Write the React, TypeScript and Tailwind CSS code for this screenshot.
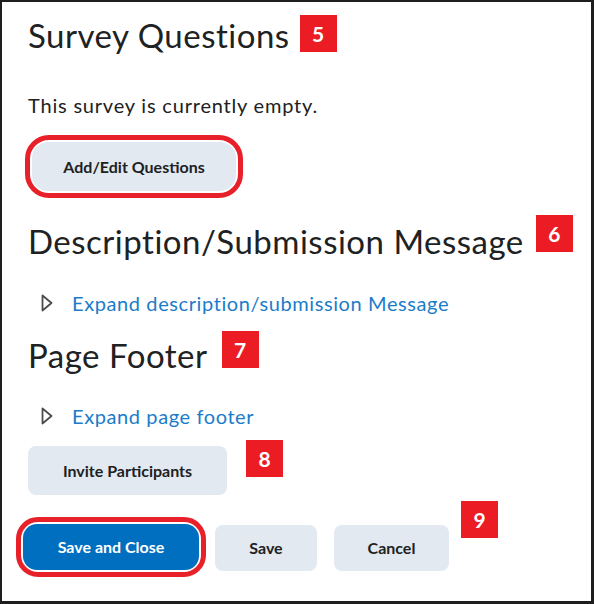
const lato = { fontFamily: "Lato, 'Noto Sans', sans-serif" };

function Badge({ n, className = "" }: { n: number; className?: string }) {
  return (
    <div
      className={`flex h-[37px] w-[37px] shrink-0 items-center justify-center bg-[#ec1c24] text-[21px] font-bold text-white ${className}`}
    >
      {n}
    </div>
  );
}

function Caret() {
  return (
    <svg width="12" height="18" viewBox="0 0 12 18" className="shrink-0">
      <polygon points="1.5,1.5 10.5,9 1.5,16.5" fill="none" stroke="#494c4e" strokeWidth="1.8" strokeLinejoin="round" />
    </svg>
  );
}

function ExpandLink({ label, className = "" }: { label: string; className?: string }) {
  return (
    <div className={`ml-[13px] flex h-[24px] items-center gap-[19px] ${className}`}>
      <Caret />
      <span className="text-[20px] leading-[24px] tracking-[0.6px] text-[#1a7cc9]">{label}</span>
    </div>
  );
}

export default function App() {
  return (
    <div
      style={lato}
      className="box-border h-[604px] w-[594px] overflow-hidden border-2 border-r-[3px] border-b-[3px] border-[#1e1e1e] bg-white pl-[26px] text-[#202122]"
    >
      <div className="mt-[13px] flex items-start gap-[10px]">
        <h1 className="text-[33px] leading-[40px] tracking-[0.5px]">Survey Questions</h1>
        <Badge n={5} />
      </div>

      <p className="mt-[38px] text-[20px] leading-[24px] tracking-[0.8px]">This survey is currently empty.</p>

      <div className="mt-[18px] inline-flex rounded-[24px] border-[5px] border-[#e8202a] bg-white p-[2px] -ml-[3px]">
        <button className="h-[49px] w-[204px] rounded-[16px] bg-[#e3e9f1] text-[16px] font-bold text-[#202122]">
          Add/Edit Questions
        </button>
      </div>

      <div className="mt-[23px] flex items-start gap-[12px]">
        <h2 className="text-[33px] leading-[40px] tracking-[0.5px]">Description/Submission Message</h2>
        <Badge n={6} className="-mt-[6px]" />
      </div>

      <ExpandLink label="Expand description/submission Message" className="mt-[30px]" />

      <div className="mt-[20px] flex items-start gap-[14px]">
        <h2 className="text-[33px] leading-[40px] tracking-[0.5px]">Page Footer</h2>
        <Badge n={7} className="-mt-[4px]" />
      </div>

      <ExpandLink label="Expand page footer" className="mt-[29px]" />

      <div className="mt-[12px] flex items-start gap-[19px]">
        <button className="mt-[6px] h-[49px] w-[199px] rounded-[8px] bg-[#e3e9f1] text-[16px] font-bold text-[#202122]">
          Invite Participants
        </button>
        <Badge n={8} />
      </div>

      <div className="mt-[6px] -ml-[12px] flex items-start">
        <div className="mt-[16px] inline-flex rounded-[22px] border-[5px] border-[#e8202a] bg-white p-[2px]">
          <button className="h-[46px] w-[176px] rounded-[14px] bg-[#006fbf] text-[16px] font-bold text-white">
            Save and Close
          </button>
        </div>
        <button className="ml-[9px] mt-[24px] h-[46px] w-[102px] rounded-[8px] bg-[#e3e9f1] text-[16px] font-bold text-[#202122]">
          Save
        </button>
        <button className="ml-[17px] mt-[24px] h-[46px] w-[115px] rounded-[8px] bg-[#e3e9f1] text-[16px] font-bold text-[#202122]">
          Cancel
        </button>
        <Badge n={9} className="ml-[12px]" />
      </div>
    </div>
  );
}
